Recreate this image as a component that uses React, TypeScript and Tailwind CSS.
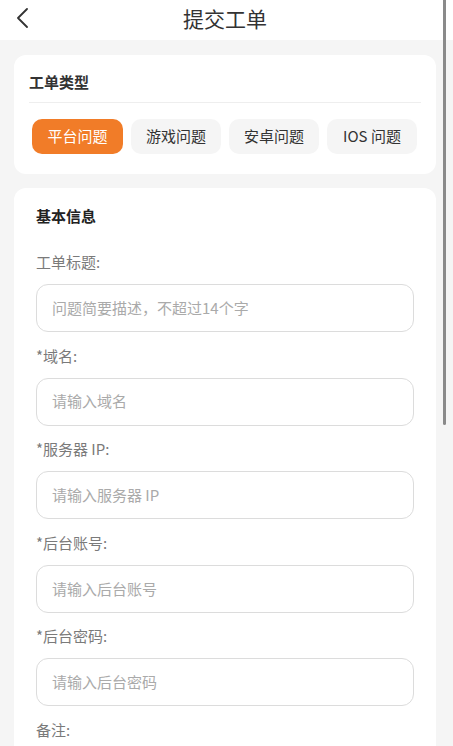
import React from "react";

const font = { fontFamily: '"Noto Sans CJK SC", "Noto Sans", sans-serif' };

const fields = [
  { label: "*域名:", ph: "请输入域名" },
  { label: "*服务器 IP:", ph: "请输入服务器 IP" },
  { label: "*后台账号:", ph: "请输入后台账号" },
  { label: "*后台密码:", ph: "请输入后台密码" },
];

function Field({ label, ph }: { label: string; ph: string }) {
  return (
    <div className="mb-[12.6px]">
      <div className="h-[22px] leading-[22px] text-[15px] text-[#7a7a7a]">{label}</div>
      <div className="mt-[11px] h-[48px] rounded-[12px] border border-[#dcdcdc] flex items-center pl-[15px] text-[15px] text-[#aaaaaa]">
        {ph}
      </div>
    </div>
  );
}

export default function App() {
  const chips = ["平台问题", "游戏问题", "安卓问题", "IOS 问题"];
  return (
    <div className="relative w-[453px] h-[746px] overflow-hidden bg-[#f5f5f5]" style={font}>
      <div className="h-[40px] bg-white relative flex items-center justify-center pr-[3px]">
        <svg className="absolute left-[15px] top-[8px]" width="16" height="20" viewBox="0 0 16 20">
          <polyline points="12,1 3,10 12,19" fill="none" stroke="#333" strokeWidth="1.8" strokeLinecap="round" strokeLinejoin="round" />
        </svg>
        <span className="text-[21px] text-[#333] leading-none -mt-[4px]">提交工单</span>
      </div>

      <div className="w-[450px] px-[14px] pt-[15px]">
        <div className="bg-white rounded-[12px] px-[15px] pt-[16px] pb-[20px]">
          <div className="text-[15px] font-semibold text-[#333] leading-[22px]">工单类型</div>
          <div className="mt-[9px] h-px bg-[#eeeeee]" />
          <div className="mt-[16px] flex gap-[8px] pl-[3px]">
            {chips.map((c, i) => (
              <div
                key={c}
                className={
                  i === 0
                    ? "w-[91px] h-[35px] rounded-[10px] bg-[#f17c28] text-white text-[15px] flex items-center justify-center"
                    : "w-[90px] h-[35px] rounded-[10px] bg-[#f5f5f5] text-[#333] text-[15px] flex items-center justify-center"
                }
              >
                {c}
              </div>
            ))}
          </div>
        </div>

        <div className="mt-[14px] bg-white rounded-t-[12px] px-[22px] pt-[17px] pb-[40px]">
          <div className="text-[15px] font-semibold text-[#222] leading-[22px]">基本信息</div>
          <div className="mt-[24px]">
            <Field label="工单标题:" ph="问题简要描述，不超过14个字" />
            {fields.map((f) => (
              <Field key={f.label} label={f.label} ph={f.ph} />
            ))}
            <div className="h-[22px] leading-[22px] text-[15px] text-[#7a7a7a]">备注:</div>
          </div>
        </div>
      </div>

      <div className="absolute left-[443px] top-0 w-[3px] h-[425px] rounded-b-full bg-[#8a8a8a]" />
    </div>
  );
}
